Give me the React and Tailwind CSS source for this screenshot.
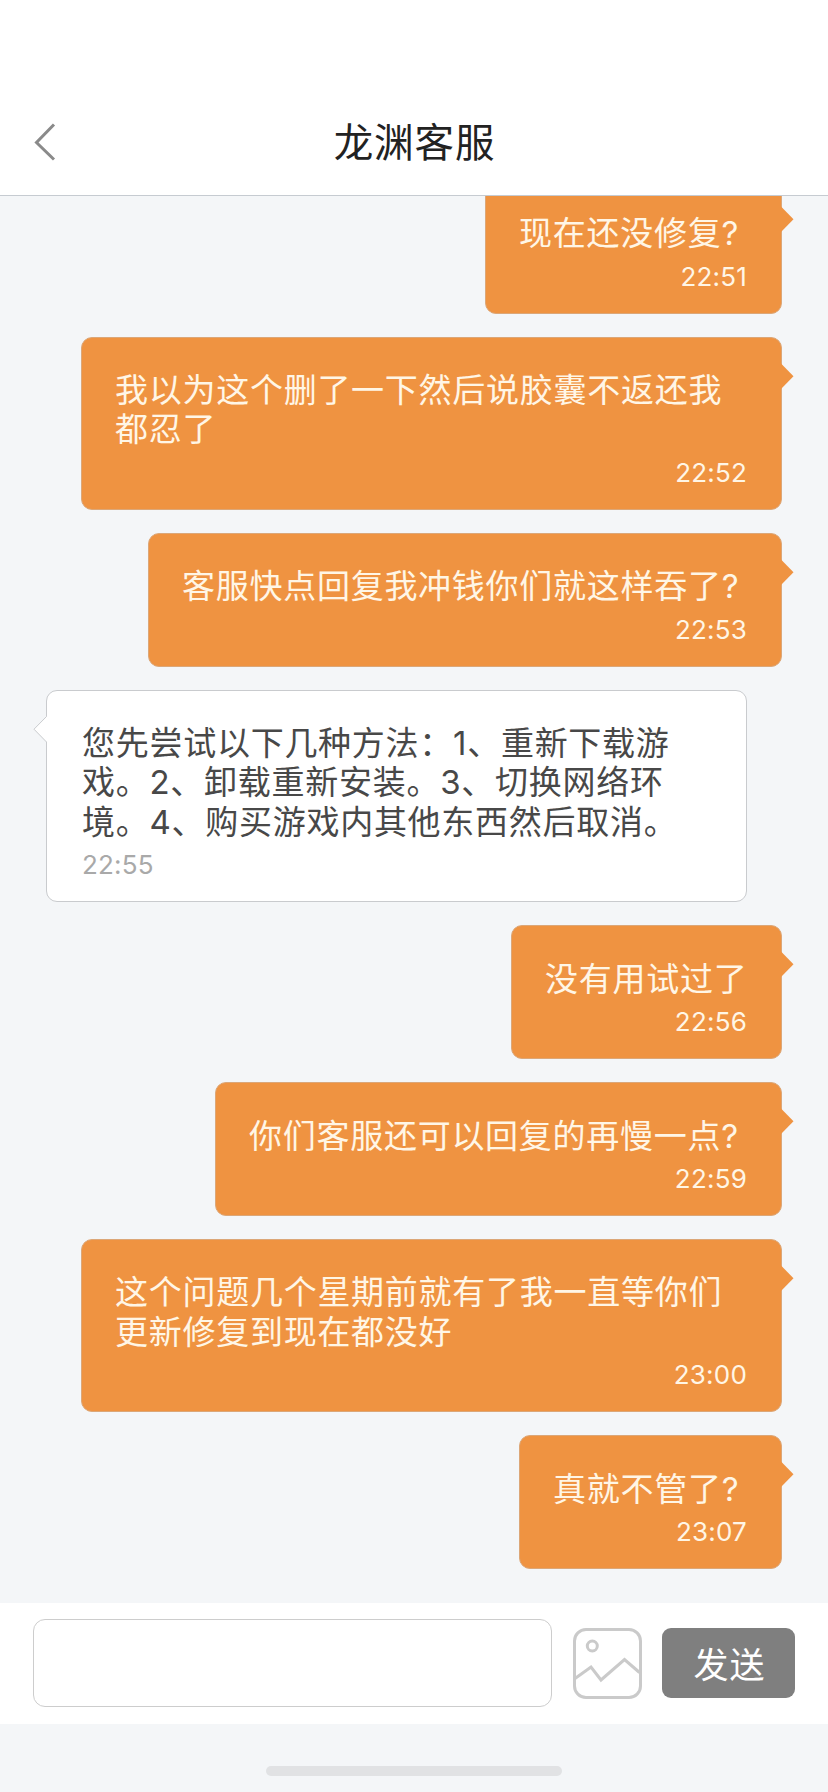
import React from 'react'

const messages = [
  { lines: ['现在还没修复?'], time: '22:51', mine: true, width: 'w-[297px]' },
  { lines: ['我以为这个删了一下然后说胶囊不返还我', '都忍了'], time: '22:52', mine: true, width: 'w-[701px]' },
  { lines: ['客服快点回复我冲钱你们就这样吞了?'], time: '22:53', mine: true, width: 'w-[634px]' },
  {
    lines: [
      '您先尝试以下几种方法：1、重新下载游',
      '戏。2、卸载重新安装。3、切换网络环',
      '境。4、购买游戏内其他东西然后取消。',
    ],
    time: '22:55',
    mine: false,
    width: 'w-[701px]',
  },
  { lines: ['没有用试过了'], time: '22:56', mine: true, width: 'w-[271px]' },
  { lines: ['你们客服还可以回复的再慢一点?'], time: '22:59', mine: true, width: 'w-[567px]' },
  { lines: ['这个问题几个星期前就有了我一直等你们', '更新修复到现在都没好'], time: '23:00', mine: true, width: 'w-[701px]' },
  { lines: ['真就不管了?'], time: '23:07', mine: true, width: 'w-[263px]' },
]

function Header() {
  return (
    <header className="relative z-10 flex h-[196px] shrink-0 items-end border-b border-[#c6cbd1] bg-white">
      <div className="flex h-[106px] w-full items-center px-[33px]">
        <button className="w-[24px]" aria-label="返回">
          <svg width="24" height="38" viewBox="0 0 24 38" fill="none" stroke="#8a8a8a" strokeWidth="3">
            <path d="M21 1.5 3.5 19.5 21 36.5" />
          </svg>
        </button>
        <h1 className="flex-1 pt-[3px] pr-[23px] text-center text-[39.5px] leading-none tracking-[0.9px] text-[#222]">
          龙渊客服
        </h1>
      </div>
    </header>
  )
}

function Tail({ mine }) {
  if (mine) {
    return (
      <svg className="absolute top-[25px] -right-[13px]" width="13" height="27" viewBox="0 0 13 27">
        <path d="M0 0.5 12.5 13.2 0 26Z" fill="#ef9341" />
      </svg>
    )
  }
  return (
    <svg className="absolute top-[25px] -left-[14px]" width="15" height="27" viewBox="0 0 15 27">
      <path d="M15 0.5 13.5 0.5 1 13.2 13.5 26H15Z" fill="#fff" />
      <path d="M13.5 0.5 1 13.2 13.5 26" fill="none" stroke="#c9cbce" />
    </svg>
  )
}

function Message({ lines, time, mine, width }) {
  return (
    <div className={mine ? 'flex justify-end pr-[46px]' : 'flex justify-start pl-[46px]'}>
      <div
        className={`relative rounded-[11px] border pt-[33.4px] pb-[16.9px] ${width} ${
          mine
            ? 'border-[#dca778] bg-[#ef9341] px-[33px] text-[#fff6e6]'
            : 'border-[#c9cbce] bg-white px-[35px] text-[#484848]'
        }`}
      >
        <Tail mine={mine} />
        <div className="text-[33px] leading-[39.5px] tracking-[0.73px] whitespace-nowrap">
          {lines.map((line) => (
            <p key={line}>{line}</p>
          ))}
        </div>
        <p
          className={`pt-[4px] text-[26px] leading-[38px] tracking-[0.2px] ${
            mine ? 'pr-[1px] text-right' : 'text-left text-[#a9a9a9]'
          }`}
        >
          {time}
        </p>
      </div>
    </div>
  )
}

function Composer() {
  return (
    <footer className="flex h-[121px] shrink-0 items-center bg-white px-[33px] pb-[2px]">
      <input className="h-[88px] w-[519px] rounded-[12px] border border-[#cdcdcd] bg-white px-4 text-[32px] outline-none" />
      <button className="mt-[2px] ml-[21px]" aria-label="图片">
        <svg width="69" height="71" viewBox="0 0 69 71" fill="none" stroke="#cacaca" strokeWidth="3">
          <rect x="1.5" y="1.5" width="66" height="68" rx="11.5" />
          <circle cx="19.3" cy="18" r="5" />
          <path d="M2 50.5 18 39 28 52 51.5 31.5 66.5 44.5" />
        </svg>
      </button>
      <button className="ml-[20px] h-[70px] w-[133px] rounded-[9px] bg-[#7f7f7f] pt-[5px] pl-[2px] text-[35px] leading-none tracking-[1px] text-white">
        发送
      </button>
    </footer>
  )
}

function App() {
  return (
    <div className="flex h-[1792px] w-[828px] flex-col overflow-hidden bg-[#f4f6f8] font-['Inter','Noto_Sans_CJK_SC',sans-serif] font-normal">
      <Header />
      <main className="flex min-h-0 flex-1 flex-col justify-end gap-[23px] overflow-hidden pb-[34px]">
        {messages.map((message) => (
          <Message key={message.time} {...message} />
        ))}
      </main>
      <Composer />
      {/* Home indicator */}
      <div className="flex h-[68px] shrink-0 items-end justify-center pb-[16px]">
        <div className="h-[10px] w-[296px] rounded-full bg-[#e1e2e4]" />
      </div>
    </div>
  )
}

export default App
